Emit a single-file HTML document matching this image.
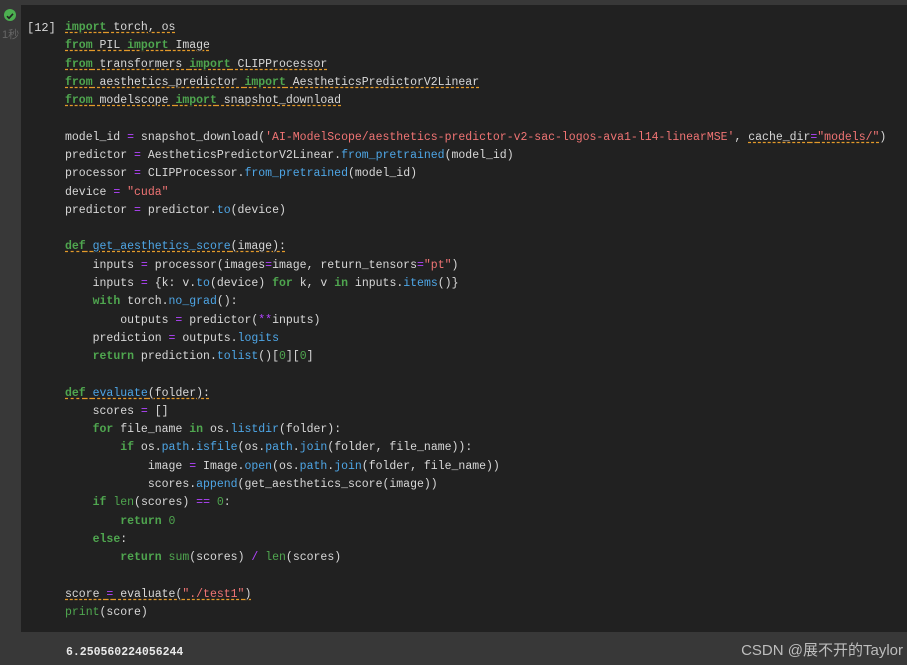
<!DOCTYPE html>
<html><head><meta charset="utf-8"><style>
body{margin:0;width:907px;height:665px;background:#383838;overflow:hidden;position:relative;font-family:"Liberation Mono",monospace}
.cell{position:absolute;left:21px;top:5px;width:886px;height:627px;background:#212121}
pre{position:absolute;left:65px;top:19px;margin:0;font-family:"Liberation Mono",monospace;font-size:11.5px;line-height:18.28px;color:#d8d8d8;white-space:pre}
.k{color:#4fa64f;font-weight:bold}.b{color:#4fa64f}.n{color:#4fa64f}
.p{color:#b344ff}.f{color:#4ea6e6}.s{color:#f07474}
.u{text-decoration:underline dashed #e49a2a;text-underline-offset:2px}
.num{position:absolute;left:27px;top:19px;font-size:12px;color:#d8d8d8;line-height:18px}
.chk{position:absolute;left:4px;top:9px;width:12px;height:12px;border-radius:50%;background:#4caf50}
.sec{position:absolute;left:2px;top:26px;font-size:11px;color:#666;font-family:"Liberation Sans","Noto Sans CJK SC",sans-serif}
.out{position:absolute;left:66px;top:646px;font-size:11.5px;color:#e8e8e8;font-weight:bold}
.wm{position:absolute;right:4px;top:639px;font-size:15px;color:#bdbdbd;font-family:"Liberation Sans","Noto Sans CJK SC",sans-serif}
</style></head><body>
<div class="chk"><svg width="12" height="12"><path d="M3 6.2l2 2 4-4.4" stroke="#212121" stroke-width="1.6" fill="none"/></svg></div>
<div class="sec">1秒</div>
<div class="cell"></div>
<div class="num">[12]</div>
<pre><span class="u"><span class="k">import</span> torch, os</span>
<span class="u"><span class="k">from</span> PIL <span class="k">import</span> Image</span>
<span class="u"><span class="k">from</span> transformers <span class="k">import</span> CLIPProcessor</span>
<span class="u"><span class="k">from</span> aesthetics_predictor <span class="k">import</span> AestheticsPredictorV2Linear</span>
<span class="u"><span class="k">from</span> modelscope <span class="k">import</span> snapshot_download</span>

model_id <span class="p">=</span> snapshot_download(<span class="s">'AI-ModelScope/aesthetics-predictor-v2-sac-logos-ava1-l14-linearMSE'</span>, <span class="u">cache_dir<span class="p">=</span><span class="s">"models/"</span></span>)
predictor <span class="p">=</span> AestheticsPredictorV2Linear.<span class="f">from_pretrained</span>(model_id)
processor <span class="p">=</span> CLIPProcessor.<span class="f">from_pretrained</span>(model_id)
device <span class="p">=</span> <span class="s">"cuda"</span>
predictor <span class="p">=</span> predictor.<span class="f">to</span>(device)

<span class="u"><span class="k">def</span> <span class="f">get_aesthetics_score</span>(image):</span>
    inputs <span class="p">=</span> processor(images<span class="p">=</span>image, return_tensors<span class="p">=</span><span class="s">"pt"</span>)
    inputs <span class="p">=</span> {k: v.<span class="f">to</span>(device) <span class="k">for</span> k, v <span class="k">in</span> inputs.<span class="f">items</span>()}
    <span class="k">with</span> torch.<span class="f">no_grad</span>():
        outputs <span class="p">=</span> predictor(<span class="p">**</span>inputs)
    prediction <span class="p">=</span> outputs.<span class="f">logits</span>
    <span class="k">return</span> prediction.<span class="f">tolist</span>()[<span class="n">0</span>][<span class="n">0</span>]

<span class="u"><span class="k">def</span> <span class="f">evaluate</span>(folder):</span>
    scores <span class="p">=</span> []
    <span class="k">for</span> file_name <span class="k">in</span> os.<span class="f">listdir</span>(folder):
        <span class="k">if</span> os.<span class="f">path</span>.<span class="f">isfile</span>(os.<span class="f">path</span>.<span class="f">join</span>(folder, file_name)):
            image <span class="p">=</span> Image.<span class="f">open</span>(os.<span class="f">path</span>.<span class="f">join</span>(folder, file_name))
            scores.<span class="f">append</span>(get_aesthetics_score(image))
    <span class="k">if</span> <span class="b">len</span>(scores) <span class="p">==</span> <span class="n">0</span>:
        <span class="k">return</span> <span class="n">0</span>
    <span class="k">else</span>:
        <span class="k">return</span> <span class="b">sum</span>(scores) <span class="p">/</span> <span class="b">len</span>(scores)

<span class="u">score <span class="p">=</span> evaluate(<span class="s">"./test1"</span>)</span>
<span class="b">print</span>(score)</pre>
<div class="out">6.250560224056244</div>
<div class="wm">CSDN @展不开的Taylor</div>
</body></html>
